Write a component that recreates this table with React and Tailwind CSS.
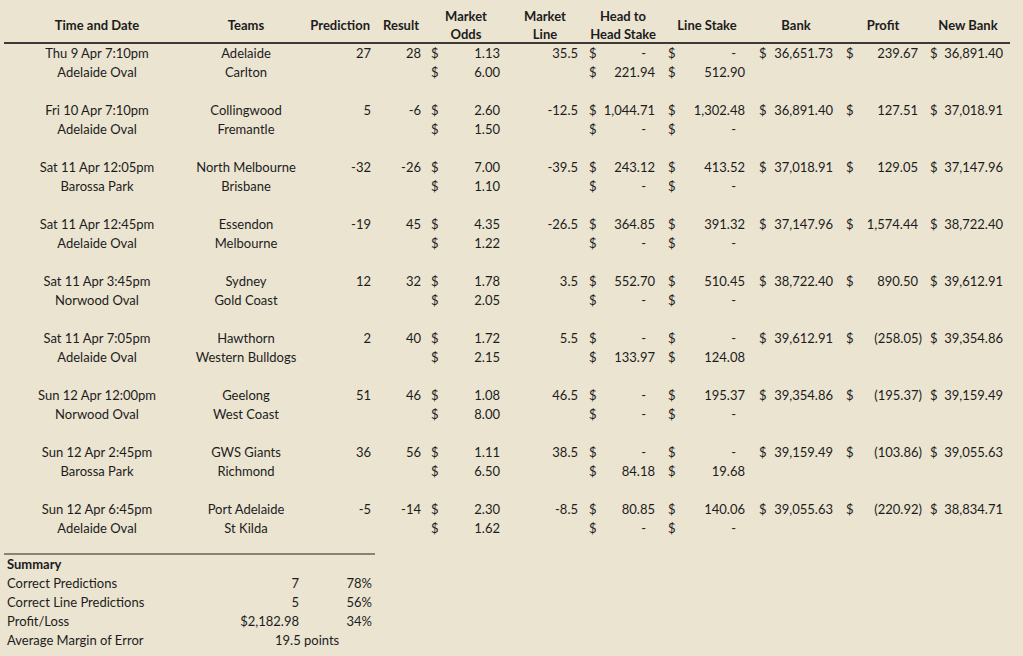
import React from "react"

const games = [
  { time: "Thu 9 Apr 7:10pm", venue: "Adelaide Oval", home: "Adelaide", away: "Carlton", pred: "27", result: "28", odds: ["1.13", "6.00"], line: "35.5", h2h: ["-", "221.94"], stake: ["-", "512.90"], bank: "36,651.73", profit: "239.67", newBank: "36,891.40" },
  { time: "Fri 10 Apr 7:10pm", venue: "Adelaide Oval", home: "Collingwood", away: "Fremantle", pred: "5", result: "-6", odds: ["2.60", "1.50"], line: "-12.5", h2h: ["1,044.71", "-"], stake: ["1,302.48", "-"], bank: "36,891.40", profit: "127.51", newBank: "37,018.91" },
  { time: "Sat 11 Apr 12:05pm", venue: "Barossa Park", home: "North Melbourne", away: "Brisbane", pred: "-32", result: "-26", odds: ["7.00", "1.10"], line: "-39.5", h2h: ["243.12", "-"], stake: ["413.52", "-"], bank: "37,018.91", profit: "129.05", newBank: "37,147.96" },
  { time: "Sat 11 Apr 12:45pm", venue: "Adelaide Oval", home: "Essendon", away: "Melbourne", pred: "-19", result: "45", odds: ["4.35", "1.22"], line: "-26.5", h2h: ["364.85", "-"], stake: ["391.32", "-"], bank: "37,147.96", profit: "1,574.44", newBank: "38,722.40" },
  { time: "Sat 11 Apr 3:45pm", venue: "Norwood Oval", home: "Sydney", away: "Gold Coast", pred: "12", result: "32", odds: ["1.78", "2.05"], line: "3.5", h2h: ["552.70", "-"], stake: ["510.45", "-"], bank: "38,722.40", profit: "890.50", newBank: "39,612.91" },
  { time: "Sat 11 Apr 7:05pm", venue: "Adelaide Oval", home: "Hawthorn", away: "Western Bulldogs", pred: "2", result: "40", odds: ["1.72", "2.15"], line: "5.5", h2h: ["-", "133.97"], stake: ["-", "124.08"], bank: "39,612.91", profit: "(258.05)", newBank: "39,354.86" },
  { time: "Sun 12 Apr 12:00pm", venue: "Norwood Oval", home: "Geelong", away: "West Coast", pred: "51", result: "46", odds: ["1.08", "8.00"], line: "46.5", h2h: ["-", "-"], stake: ["195.37", "-"], bank: "39,354.86", profit: "(195.37)", newBank: "39,159.49" },
  { time: "Sun 12 Apr 2:45pm", venue: "Barossa Park", home: "GWS Giants", away: "Richmond", pred: "36", result: "56", odds: ["1.11", "6.50"], line: "38.5", h2h: ["-", "84.18"], stake: ["-", "19.68"], bank: "39,159.49", profit: "(103.86)", newBank: "39,055.63" },
  { time: "Sun 12 Apr 6:45pm", venue: "Adelaide Oval", home: "Port Adelaide", away: "St Kilda", pred: "-5", result: "-14", odds: ["2.30", "1.62"], line: "-8.5", h2h: ["80.85", "-"], stake: ["140.06", "-"], bank: "39,055.63", profit: "(220.92)", newBank: "38,834.71" },
]

// accounting style cell: "$" hugs the left, number hugs the right
function Money({ value, className }) {
  const isDash = value === "-"
  const isNeg = value.startsWith("(")
  return (
    <div className={`flex justify-between ${className}`}>
      <span>$</span>
      <span className={isDash ? "pr-[13px]" : isNeg ? "" : "pr-[4px]"}>{value}</span>
    </div>
  )
}

function Header() {
  return (
    <div className="flex h-[44px] items-center border-b-2 border-[#3b3a36] pt-[8px] font-bold leading-[18px]">
      <div className="w-[186px] text-center">Time and Date</div>
      <div className="w-[112px] text-center">Teams</div>
      <div className="w-[74px] pr-[6px] text-right">Prediction</div>
      <div className="w-[50px] pr-[7px] text-right">Result</div>
      <div className="w-[80px] text-center">Market<br />Odds</div>
      <div className="w-[78px] text-center">Market<br />Line</div>
      <div className="w-[78px] text-center">Head to<br />Head Stake</div>
      <div className="w-[90px] text-center">Line Stake</div>
      <div className="w-[88px] text-center">Bank</div>
      <div className="w-[86px] text-center">Profit</div>
      <div className="w-[84px] text-center">New Bank</div>
    </div>
  )
}

function GameRow({ g, line }) {
  const first = line === 0
  return (
    <div className="flex h-[19px] items-center">
      <div className="w-[186px] text-center">{first ? g.time : g.venue}</div>
      <div className="w-[112px] text-center">{first ? g.home : g.away}</div>
      <div className="w-[74px] pr-[5px] text-right">{first ? g.pred : ""}</div>
      <div className="w-[50px] pr-[5px] text-right">{first ? g.result : ""}</div>
      <div className="flex w-[80px] justify-between pl-[5px] pr-[6px]">
        <span>$</span>
        <span>{g.odds[line]}</span>
      </div>
      <div className="w-[78px] pr-[6px] text-right">{first ? g.line : ""}</div>
      <Money value={g.h2h[line]} className="w-[78px] pl-[5px] pr-[3px]" />
      <Money value={g.stake[line]} className="w-[90px] pl-[6px] pr-[3px]" />
      {first ? (
        <>
          <Money value={g.bank} className="w-[88px] pl-[7px] pr-[3px]" />
          <Money value={g.profit} className="w-[86px] pl-[6px] pr-[4px]" />
          <Money value={g.newBank} className="w-[84px] pl-[4px] pr-[3px]" />
        </>
      ) : null}
    </div>
  )
}

export default function App() {
  return (
    <div
      className="min-h-[656px] w-full bg-[#ebe4d1] pl-[4px] text-[13px] text-[#1c1c1c]"
      style={{ fontFamily: "Lato, 'Liberation Sans', sans-serif" }}
    >
      <div className="w-[1006px]">
        <Header />

        <div className="flex flex-col gap-[19px]">
          {games.map((g) => (
            <div key={g.time}>
              <GameRow g={g} line={0} />
              <GameRow g={g} line={1} />
            </div>
          ))}
        </div>
      </div>

      {/* SUMMARY */}
      <div className="mt-[15px] w-[371px] border-t-2 border-[#86837b]">
        <div className="flex h-[19px] items-center pl-[3px] font-bold">Summary</div>
        <div className="flex h-[19px] items-center">
          <div className="w-[200px] pl-[3px]">Correct Predictions</div>
          <div className="w-[95px] text-right">7</div>
          <div className="w-[76px] pr-[3px] text-right">78%</div>
        </div>
        <div className="flex h-[19px] items-center">
          <div className="w-[200px] pl-[3px]">Correct Line Predictions</div>
          <div className="w-[95px] text-right">5</div>
          <div className="w-[76px] pr-[3px] text-right">56%</div>
        </div>
        <div className="flex h-[19px] items-center">
          <div className="w-[200px] pl-[3px]">Profit/Loss</div>
          <div className="w-[95px] text-right">$2,182.98</div>
          <div className="w-[76px] pr-[3px] text-right">34%</div>
        </div>
        <div className="flex h-[19px] items-center">
          <div className="w-[200px] pl-[3px]">Average Margin of Error</div>
          <div className="w-[171px] pl-[71px]">19.5 points</div>
        </div>
      </div>
    </div>
  )
}
